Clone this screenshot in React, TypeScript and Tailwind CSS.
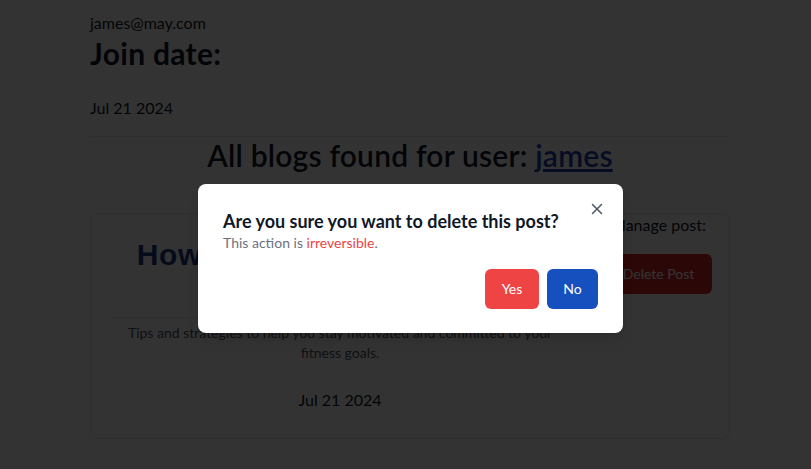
import React from "react";

export default function App() {
  return (
    <div className="relative h-[469px] overflow-hidden bg-white text-[#111827] font-['Lato',sans-serif]">
      <div className="ml-[90px] w-[640px] pt-[11px]">
        <p className="text-base leading-6">james@may.com</p>
        <h2 className="text-[30px] font-bold leading-9 tracking-[0.3px]">Join date:</h2>
        <p className="mt-[25px] text-base leading-6">Jul 21 2024</p>
        <hr className="mt-[16px] border-[#e5e7eb]" />
        <h2 className="text-center text-[30px] font-semibold leading-9 tracking-[0.2px]">
          All blogs found for user:{" "}
          <a className="text-[#1e40af] underline">james</a>
        </h2>
        <div className="mt-[40px] flex h-[226px] rounded-lg border border-[#e5e7eb]">
          <div className="ml-[18px] flex w-[462px] flex-col items-center">
            <h3 className="mt-[23px] w-[440px] text-center font-['Liberation_Sans',sans-serif] text-[30px] font-bold leading-9 tracking-[0.7px] text-[#1e3a8a]">
              How to Stay Motivated with Your Fitness Goals
            </h3>
            <div className="mt-[8px] w-full border-t border-[#e5e7eb]" />
            <p className="mt-[5px] w-[440px] text-center text-sm leading-5 text-[#4b5563]">
              Tips and strategies to help you stay motivated and committed to your fitness goals.
            </p>
            <p className="mt-[25px] text-base leading-6">Jul 21 2024</p>
          </div>
          <div className="-mt-[1px] flex flex-1 flex-col items-center pl-[30px] pr-[13px]">
            <p className="text-base leading-6">Manage post:</p>
            <button className="mt-[17px] h-10 w-[106px] rounded-md bg-[#dc2626] text-sm text-white">
              Delete Post
            </button>
          </div>
        </div>
      </div>
      <div className="absolute inset-0 bg-black/80" />
      <div className="absolute left-[198px] top-[184px] h-[149px] w-[425px] rounded-lg bg-white px-[25px] pt-[25px] shadow-lg">
        <button className="absolute right-[19px] top-[18px] text-[#4b5563]">
          <svg width="14" height="14" viewBox="0 0 14 14" fill="none" stroke="currentColor" strokeWidth="1.5" strokeLinecap="round">
            <path d="M2.5 2.5l9 9M11.5 2.5l-9 9" />
          </svg>
        </button>
        <h2 className="text-lg font-bold leading-6">Are you sure you want to delete this post?</h2>
        <p className="text-sm leading-5 text-[#6b7280]">
          This action is <span className="text-[#ef4444]">irreversible</span>.
        </p>
        <div className="mt-[16px] flex justify-end gap-2">
          <button className="h-10 w-[54px] rounded-md bg-[#ef4444] text-sm text-white">Yes</button>
          <button className="h-10 w-[51px] rounded-md bg-[#1650bf] text-sm text-white">No</button>
        </div>
      </div>
    </div>
  );
}
